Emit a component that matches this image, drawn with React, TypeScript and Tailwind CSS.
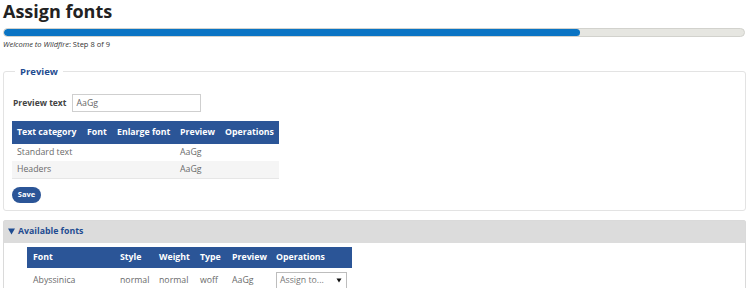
import React from "react"

const catRows = [
  { name: "Standard text", preview: "AaGg" },
  { name: "Headers", preview: "AaGg" },
]

function Down({ className }: { className?: string }) {
  return (
    <svg viewBox="0 0 6 6" className={className}>
      <path d="M0 0.5h6L3 5.5z" fill="currentColor" />
    </svg>
  )
}

export default function App() {
  return (
    <div className="w-[750px] h-[288px] overflow-hidden bg-white pl-[3px] pr-[4px] font-['Open_Sans',sans-serif] text-[#333]">
      <h1 className="text-[18px] leading-[22px] font-bold text-[#222]">Assign fonts</h1>

      {/* progress */}
      <div className="mt-[6px] h-[9px] w-[742px] rounded-full border border-[#d2d2cd] bg-[#e6e6e1] overflow-hidden">
        <div className="h-full w-[576px] rounded-full bg-[#0a74c4]"></div>
      </div>
      <div className="mt-[2px] text-[7.5px] leading-[11px] text-[#333]">
        <em>Welcome to Wildfire</em>: Step 8 of 9
      </div>

      <fieldset className="mt-[15px] w-[743px] rounded-[3px] border border-[#e3e3e3] pl-[8px] pb-[7px]">
        <legend className="ml-[3px] px-[5px] text-[9.5px] leading-[13px] font-bold text-[#1f4c91]">Preview</legend>

        <div className="mt-[16px] flex items-center">
          <label className="ml-[1px] text-[8.5px] font-bold text-[#444]">Preview text</label>
          <input
            defaultValue="AaGg"
            className="ml-[6px] h-[18px] w-[129px] border border-[#cfcfcf] px-[3px] text-[8.75px] text-[#666] outline-none"
          />
        </div>

        <table className="mt-[9px] w-[267px] table-fixed border-collapse text-[8.75px]">
          <colgroup>
            <col className="w-[70px]" />
            <col className="w-[30px]" />
            <col className="w-[63px]" />
            <col className="w-[45px]" />
            <col className="w-[59px]" />
          </colgroup>
          <thead>
            <tr className="h-[23px] bg-[#2b5597] text-left text-white">
              <th className="pl-[5px] font-bold whitespace-nowrap">Text category</th>
              <th className="pl-[5px] font-bold">Font</th>
              <th className="pl-[5px] font-bold whitespace-nowrap">Enlarge font</th>
              <th className="pl-[5px] font-bold">Preview</th>
              <th className="pl-[5px] font-bold">Operations</th>
            </tr>
          </thead>
          <tbody className="text-[#6a6a6a]">
            {catRows.map((r, i) => (
              <tr key={r.name} className={i % 2 ? "h-[17px] bg-[#f5f5f5] border-b border-[#e6e6e6]" : "h-[17px]"}>
                <td className="pl-[5px] whitespace-nowrap">{r.name}</td>
                <td></td>
                <td></td>
                <td className="pl-[5px]">{r.preview}</td>
                <td></td>
              </tr>
            ))}
          </tbody>
        </table>

        <button className="mt-[8px] h-[16px] w-[29px] rounded-full bg-[#2b5597] text-[7.5px] font-bold text-white">Save</button>
      </fieldset>

      {/* available fonts */}
      <div className="mt-[9px] w-[743px] border border-[#dadada] rounded-t-[2px]">
        <div className="flex h-[22px] items-center bg-[#dcdcdc] pl-[4px] text-[8.75px] font-bold text-[#1f4c91]">
          <Down className="mr-[3px] h-[7px] w-[7px]" />
          Available fonts
        </div>
        <div className="pl-[23px] pt-[4px] pb-[10px]">
          <table className="w-[325px] table-fixed border-collapse text-[8.75px]">
            <colgroup>
              <col className="w-[87px]" />
              <col className="w-[39px]" />
              <col className="w-[41px]" />
              <col className="w-[32px]" />
              <col className="w-[44px]" />
              <col className="w-[82px]" />
            </colgroup>
            <thead>
              <tr className="h-[21px] bg-[#2b5597] text-left text-white">
                <th className="pl-[6px] font-bold">Font</th>
                <th className="pl-[6px] font-bold">Style</th>
                <th className="pl-[6px] font-bold">Weight</th>
                <th className="pl-[6px] font-bold">Type</th>
                <th className="pl-[6px] font-bold">Preview</th>
                <th className="pl-[6px] font-bold">Operations</th>
              </tr>
            </thead>
            <tbody className="text-[#6a6a6a]">
              <tr className="h-[26px]">
                <td className="pl-[6px]">Abyssinica</td>
                <td className="pl-[6px]">normal</td>
                <td className="pl-[6px]">normal</td>
                <td className="pl-[6px]">woff</td>
                <td className="pl-[6px]">AaGg</td>
                <td className="pl-[6px]">
                  <div className="flex h-[18px] w-[71px] items-center justify-between border border-[#bdbdbd] pl-[3px] pr-[4px] text-[#777]">
                    <span>Assign to...</span>
                    <Down className="h-[5px] w-[6px] text-[#111]" />
                  </div>
                </td>
              </tr>
            </tbody>
          </table>
        </div>
      </div>
    </div>
  )
}
